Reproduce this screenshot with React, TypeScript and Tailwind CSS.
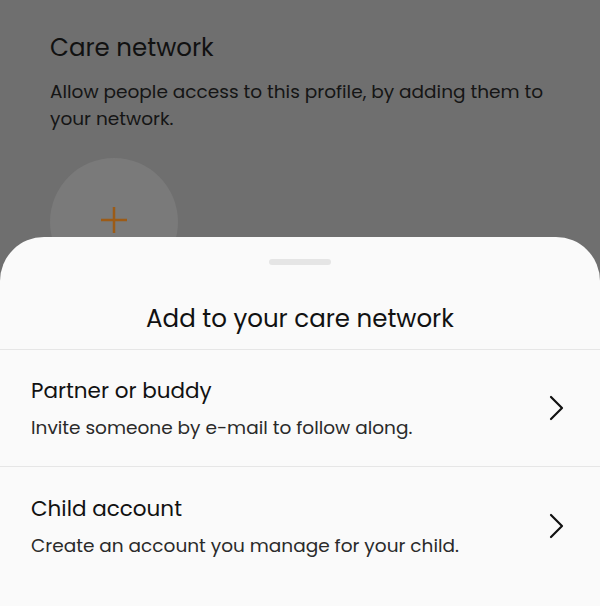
const font = { fontFamily: '"Poppins", "Open Sans", "Noto Sans", sans-serif' };

const options = [
  { title: "Partner or buddy", text: "Invite someone by e-mail to follow along." },
  { title: "Child account", text: "Create an account you manage for your child." },
];

function Chevron() {
  return (
    <svg width="16" height="26" viewBox="0 0 16 26" fill="none">
      <path d="M3 2l11 11-11 11" stroke="#111" strokeWidth="2.2" strokeLinecap="round" strokeLinejoin="round" />
    </svg>
  );
}

export default function App() {
  return (
    <div className="relative h-[606px] w-full overflow-hidden bg-[#6f6f6f]" style={font}>
      {/* page behind the sheet */}
      <div className="px-[50px] pt-[32px]">
        <h2 className="text-[24.5px] leading-[32px] text-[#111]">Care network</h2>
        <p className="mt-[14px] text-[18.5px] leading-[27px] text-[#151515]">
          Allow people access to this profile, by adding them to your network.
        </p>
        <div className="mt-[26px] flex h-[128px] w-[128px] items-center justify-center rounded-full bg-[#7a7a7a]">
          <svg width="28" height="28" viewBox="0 0 28 28" className="-mt-[4px]">
            <path d="M14 1v26M1 14h26" stroke="#9c5b17" strokeWidth="2.5" />
          </svg>
        </div>
      </div>

      {/* bottom sheet */}
      <div className="absolute inset-x-0 bottom-0 top-[237px] flex flex-col rounded-t-[44px] bg-[#fafafa]">
        <div className="mx-auto mt-[22px] h-[6px] w-[62px] rounded-full bg-[#e5e5e5]" />
        <h3 className="pt-[38px] pb-[14px] text-center text-[24.5px] leading-[32px] text-[#111] border-b border-[#e6e6e6]">
          Add to your care network
        </h3>
        {options.map((o, i) => (
          <div
            key={o.title}
            className={`flex h-[117px] items-center justify-between pl-[31px] pr-[36px] ${
              i === 0 ? "border-b border-[#e6e6e6]" : ""
            }`}
          >
            <div className="mt-[1px]">
              <div className="text-[21.5px] leading-[30px] text-[#111]">{o.title}</div>
              <div className="mt-[9px] text-[18.5px] leading-[26px] text-[#2a2a2a]">{o.text}</div>
            </div>
            <Chevron />
          </div>
        ))}
      </div>
    </div>
  );
}
